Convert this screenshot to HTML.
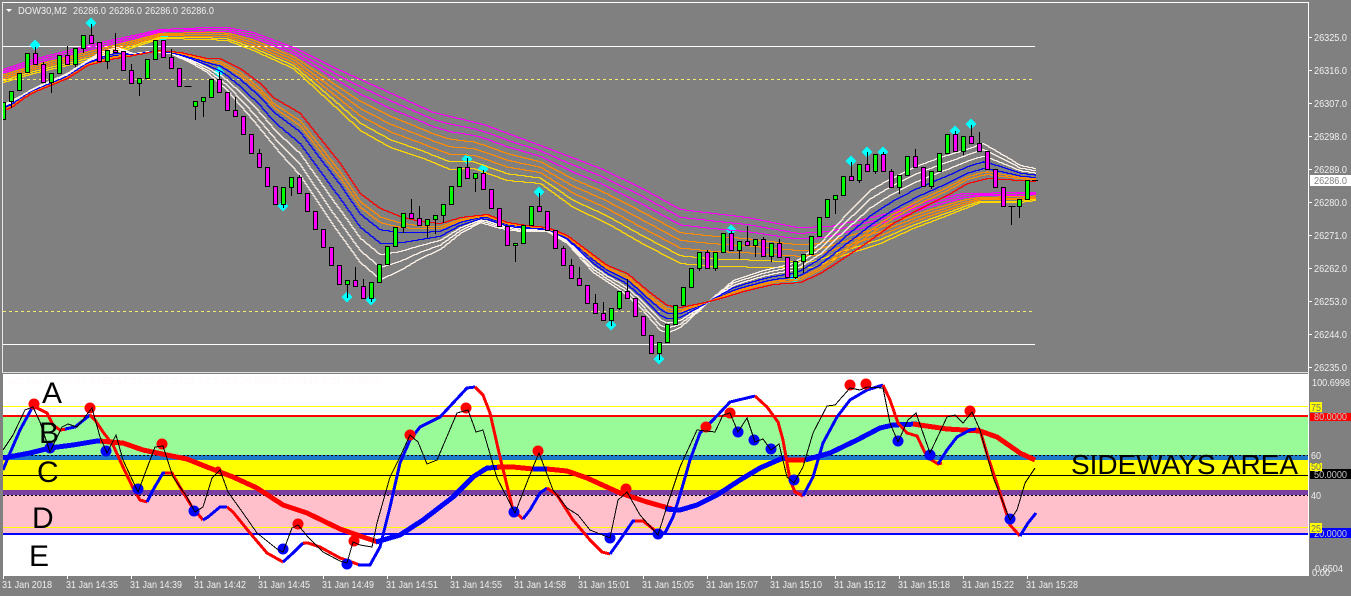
<!DOCTYPE html>
<html>
<head>
<meta charset="utf-8">
<title>DOW30,M2</title>
<style>
html,body{margin:0;padding:0;background:#808080;width:1351px;height:596px;overflow:hidden}
svg{display:block}
text{font-family:"Liberation Sans",sans-serif}
.ax{font-size:10.5px;fill:#f0f0f0}
.dk{font-size:10.5px;fill:#c8c8c8}
.yl{font-size:10.5px;fill:#707070}
.big{font-size:30px;fill:#000}
</style>
</head>
<body>
<svg xmlns="http://www.w3.org/2000/svg" width="1351" height="596" viewBox="0 0 1351 596">
<defs>
<clipPath id="top"><rect x="3" y="3" width="1305" height="369"/></clipPath>
<clipPath id="bot"><rect x="3" y="374" width="1305" height="202"/></clipPath>
</defs>
<rect width="1351" height="596" fill="#808080"/>
<g shape-rendering="crispEdges">
<rect x="2" y="2" width="1307" height="1" fill="#fff"/>
<rect x="2" y="2" width="1" height="371" fill="#e8e8e8"/>
<rect x="1308" y="2" width="1" height="574" fill="#fff"/>
<rect x="2" y="372" width="1307" height="1" fill="#e0e0e0"/>
<rect x="3" y="46" width="1032" height="1" fill="#fff"/>
<rect x="3" y="344" width="1032" height="1" fill="#fff"/>
<path d="M3 79.5H1035M3 311.5H1035" stroke="#f3ee70" stroke-dasharray="3 3" fill="none"/>
</g>
<polygon points="6,9 12,9 9,12" fill="#fff"/>
<text class="ax" x="18" y="14" textLength="49" lengthAdjust="spacingAndGlyphs">DOW30,M2</text>
<text class="ax" x="73" y="14" textLength="33" lengthAdjust="spacingAndGlyphs">26286.0</text>
<text class="ax" x="109" y="14" textLength="33" lengthAdjust="spacingAndGlyphs">26286.0</text>
<text class="ax" x="145" y="14" textLength="33" lengthAdjust="spacingAndGlyphs">26286.0</text>
<text class="ax" x="181" y="14" textLength="33" lengthAdjust="spacingAndGlyphs">26286.0</text>
<g id="diam" fill="#00ffff" clip-path="url(#top)"></g>
<g id="rib" fill="none" clip-path="url(#top)"></g>
<g id="cand" clip-path="url(#top)" shape-rendering="crispEdges"></g>
<path d="M1032 180.5H1038" stroke="#000" shape-rendering="crispEdges"/>

<g fill="#fff" shape-rendering="crispEdges">
<rect x="1309" y="37" width="3" height="1"/><rect x="1309" y="70" width="3" height="1"/><rect x="1309" y="103" width="3" height="1"/><rect x="1309" y="136" width="3" height="1"/><rect x="1309" y="169" width="3" height="1"/><rect x="1309" y="202" width="3" height="1"/><rect x="1309" y="235" width="3" height="1"/><rect x="1309" y="268" width="3" height="1"/><rect x="1309" y="301" width="3" height="1"/><rect x="1309" y="334" width="3" height="1"/><rect x="1309" y="367" width="3" height="1"/>
</g>
<g>
<text class="ax" x="1314" y="41" textLength="33" lengthAdjust="spacingAndGlyphs">26325.0</text>
<text class="ax" x="1314" y="74" textLength="33" lengthAdjust="spacingAndGlyphs">26316.0</text>
<text class="ax" x="1314" y="107" textLength="33" lengthAdjust="spacingAndGlyphs">26307.0</text>
<text class="ax" x="1314" y="140" textLength="33" lengthAdjust="spacingAndGlyphs">26298.0</text>
<text class="ax" x="1314" y="173" textLength="33" lengthAdjust="spacingAndGlyphs">26289.0</text>
<text class="ax" x="1314" y="206" textLength="33" lengthAdjust="spacingAndGlyphs">26280.0</text>
<text class="ax" x="1314" y="239" textLength="33" lengthAdjust="spacingAndGlyphs">26271.0</text>
<text class="ax" x="1314" y="272" textLength="33" lengthAdjust="spacingAndGlyphs">26262.0</text>
<text class="ax" x="1314" y="305" textLength="33" lengthAdjust="spacingAndGlyphs">26253.0</text>
<text class="ax" x="1314" y="338" textLength="33" lengthAdjust="spacingAndGlyphs">26244.0</text>
<text class="ax" x="1314" y="371" textLength="33" lengthAdjust="spacingAndGlyphs">26235.0</text>
</g>
<rect x="1310" y="175" width="41" height="11" fill="#fff"/>
<text x="1314" y="184" style="font-size:10.5px" fill="#808080" textLength="33" lengthAdjust="spacingAndGlyphs">26286.0</text>

<!-- lower window -->
<g shape-rendering="crispEdges">
<rect x="3" y="374" width="1305" height="202" fill="#fff"/>
<rect x="3" y="417" width="1305" height="38" fill="#98fb98"/>
<rect x="3" y="455" width="1305" height="5" fill="#1e78c8"/>
<rect x="3" y="460" width="1305" height="30" fill="#ffff00"/>
<rect x="3" y="490" width="1305" height="5" fill="#7a3fa0"/>
<rect x="3" y="495" width="1305" height="38" fill="#ffc0cb"/>
<rect x="3" y="406" width="1305" height="1" fill="#ffff00"/>
<rect x="3" y="527" width="1305" height="1" fill="#ffff00"/>
<rect x="3" y="415" width="1305" height="2" fill="#ff0000"/>
<rect x="3" y="533" width="1305" height="2" fill="#0000ff"/>
<rect x="3" y="475" width="1305" height="1" fill="#000"/>
<path d="M3 455.5H1308M3 495.5H1308" stroke="#000" stroke-dasharray="2 2" fill="none"/>
</g>
<text x="7" y="384" style="font-size:10px" fill="#fff9f9" textLength="374" lengthAdjust="spacingAndGlyphs">rsi2 Ma (10,0) 57.5722 57.5723 57.5722 57.5723 30.8050 28.4149 RSI 49.8059</text>

<g clip-path="url(#bot)" fill="none" stroke-linejoin="round" shape-rendering="crispEdges">
<g stroke-width="5">
<polyline stroke="#0000ff" points="3,458 30,453 50,448 73,445 97,441 102,441"/>
<polyline stroke="#ff0000" points="100,441 110,442 123,443 143,450 167,455 187,459 207,467 233,477 257,488 283,505 307,513 340,529 360,536 378,542"/>
<polyline stroke="#0000ff" points="376,542 400,535 423,520 453,497 473,477 487,468 503,467"/>
<polyline stroke="#ff0000" points="497,467 513,467 533,469"/>
<polyline stroke="#0000ff" points="533,469 547,469"/>
<polyline stroke="#ff0000" points="547,469 567,471 587,478 620,493 647,502 672,509"/>
<polyline stroke="#0000ff" points="665,509 680,510 697,505 717,495 740,480 760,468 783,458 788,459"/>
<polyline stroke="#ff0000" points="786,460 805,460"/>
<polyline stroke="#0000ff" points="805,460 830,453 857,440 880,428 893,425 917,424"/>
<polyline stroke="#ff0000" points="913,424 947,429 980,431 997,437 1020,453 1035,460"/>
</g>
<g stroke-width="3">
<polyline stroke="#0000ff" points="3,470 10,453 20,430 32,408 36,407"/>
<polyline stroke="#ff0000" points="35,407 47,413 53,425 60,430 67,429"/>
<polyline stroke="#0000ff" points="65,429 75,427 90,415"/>
<polyline stroke="#ff0000" points="90,415 95,420 103,432 113,445 123,467 133,488 140,500 147,502"/>
<polyline stroke="#0000ff" points="147,502 153,490 163,473 167,473"/>
<polyline stroke="#ff0000" points="165,473 172,473 180,487 192,507 203,520"/>
<polyline stroke="#0000ff" points="203,520 208,517 220,507 227,507"/>
<polyline stroke="#ff0000" points="227,507 233,512 250,533 267,553 283,562"/>
<polyline stroke="#0000ff" points="283,562 293,553 302,544 305,543"/>
<polyline stroke="#ff0000" points="303,543 308,543 320,547 340,558 360,565"/>
<polyline stroke="#0000ff" points="358,565 370,565 380,547 390,507 400,463 410,440 420,427 440,417 467,388 475,387"/>
<polyline stroke="#ff0000" points="475,387 483,395 490,413 500,457 513,510 523,519"/>
<polyline stroke="#0000ff" points="523,519 530,510 540,493 547,488"/>
<polyline stroke="#ff0000" points="547,488 557,495 573,520 590,540 602,552 610,554"/>
<polyline stroke="#0000ff" points="610,554 620,540 633,521 637,521"/>
<polyline stroke="#ff0000" points="635,521 643,521 657,532 665,533"/>
<polyline stroke="#0000ff" points="662,533 665,533 673,517 680,495 690,460 700,433 713,420 730,402 755,396"/>
<polyline stroke="#ff0000" points="755,396 767,407 778,422 783,440 790,480 795,492 803,496"/>
<polyline stroke="#0000ff" points="803,496 813,477 823,443 837,417 850,400 867,390 883,385"/>
<polyline stroke="#ff0000" points="883,385 890,400 898,423 907,433 917,436 927,457 938,464 942,463"/>
<polyline stroke="#0000ff" points="938,464 947,450 957,437 970,430 976,429"/>
<polyline stroke="#ff0000" points="976,429 980,430 988,457 1000,493 1010,525 1020,536"/>
<polyline stroke="#0000ff" points="1020,536 1028,523 1036,513"/>
</g>
</g>
<g clip-path="url(#bot)" fill="#ff0000">
<circle cx="34" cy="404" r="5.5"/><circle cx="90" cy="408" r="5.5"/><circle cx="162" cy="444" r="5.5"/><circle cx="218" cy="470" r="3.5"/><circle cx="298" cy="524" r="5.5"/><circle cx="354" cy="541" r="5.5"/><circle cx="410" cy="435" r="5.5"/><circle cx="466" cy="408" r="5.5"/><circle cx="538" cy="451" r="5.5"/><circle cx="626" cy="489" r="5.5"/><circle cx="706" cy="427" r="5.5"/><circle cx="730" cy="413" r="5.5"/><circle cx="850" cy="385" r="5.5"/><circle cx="866" cy="384" r="5.5"/><circle cx="970" cy="411" r="5.5"/>
</g>
<g clip-path="url(#bot)" fill="#0000ff">
<circle cx="50" cy="448" r="5.5"/><circle cx="106" cy="451" r="5.5"/><circle cx="138" cy="489" r="5.5"/><circle cx="194" cy="511" r="5.5"/><circle cx="283" cy="549" r="5.5"/><circle cx="347" cy="564" r="5.5"/><circle cx="514" cy="512" r="5.5"/><circle cx="610" cy="538" r="5.5"/><circle cx="658" cy="534" r="5.5"/><circle cx="738" cy="432" r="5.5"/><circle cx="754" cy="440" r="5.5"/><circle cx="771" cy="449" r="5.5"/><circle cx="794" cy="480" r="5.5"/><circle cx="898" cy="441" r="5.5"/><circle cx="930" cy="455" r="5.5"/><circle cx="1010" cy="519" r="5.5"/>
</g>
<polyline fill="none" stroke="#000" stroke-width="1" shape-rendering="crispEdges" clip-path="url(#bot)" points="3,450 13,435 25,410 33,407 40,422 50,452 62,427 68,424 77,427 92,408 100,437 107,453 116,435 123,460 138,492 155,447 163,446 173,477 187,497 195,512 203,507 212,478 220,470 228,492 243,513 257,533 277,549 283,552 292,528 298,525 308,537 323,552 340,561 347,563 353,542 360,545 372,547 377,523 390,477 400,457 410,435 418,442 427,464 437,460 457,413 468,410 476,432 483,430 497,478 515,513 533,467 539,453 553,490 567,508 578,515 590,530 610,538 618,500 627,492 640,515 658,535 668,503 680,467 697,430 715,432 723,415 730,413 738,432 747,418 755,442 763,439 771,450 779,444 787,477 794,483 803,467 813,433 827,406 835,405 850,388 860,390 867,387 883,388 890,423 898,442 908,420 916,413 930,453 947,417 955,415 963,423 972,412 980,430 993,477 1010,520 1017,510 1025,483 1035,468"/>

<text class="big" x="42" y="403">A</text>
<text class="big" x="39" y="443">B</text>
<text class="big" x="37" y="482">C</text>
<text class="big" x="32" y="528">D</text>
<text class="big" x="29" y="566">E</text>
<text x="1071" y="474" style="font-size:28px" fill="#000" textLength="227" lengthAdjust="spacingAndGlyphs">SIDEWAYS AREA</text>

<text class="ax" x="1312" y="386" textLength="38" lengthAdjust="spacingAndGlyphs">100.6998</text>
<rect x="1310" y="413" width="41" height="8" fill="#ff0000"/>
<text class="dk" x="1314" y="420" textLength="33" lengthAdjust="spacingAndGlyphs">80.0000</text>
<rect x="1310" y="402" width="12" height="10" fill="#ffff00"/>
<text class="yl" x="1311" y="411" textLength="10" lengthAdjust="spacingAndGlyphs">75</text>
<text class="ax" x="1311" y="459" textLength="10" lengthAdjust="spacingAndGlyphs">60</text>
<rect x="1310" y="469" width="41" height="10" fill="#000"/>
<text class="dk" x="1314" y="478" textLength="33" lengthAdjust="spacingAndGlyphs">50.0000</text>
<rect x="1310" y="463" width="12" height="8" fill="#ffff00"/>
<text class="yl" x="1311" y="470" textLength="10" lengthAdjust="spacingAndGlyphs">50</text>
<text class="ax" x="1311" y="499" textLength="10" lengthAdjust="spacingAndGlyphs">40</text>
<rect x="1310" y="528" width="41" height="10" fill="#0000ff"/>
<text class="dk" x="1314" y="537" textLength="33" lengthAdjust="spacingAndGlyphs">20.0000</text>
<rect x="1310" y="523" width="12" height="10" fill="#ffff00"/>
<text class="yl" x="1311" y="532" textLength="10" lengthAdjust="spacingAndGlyphs">25</text>
<text class="ax" x="1315" y="572" textLength="28" lengthAdjust="spacingAndGlyphs">0.6504</text>
<text class="ax" x="1312" y="576" textLength="18" lengthAdjust="spacingAndGlyphs">0.00</text>

<g fill="#fff" shape-rendering="crispEdges">
<rect x="3" y="576" width="1" height="3"/><rect x="67" y="576" width="1" height="3"/><rect x="131" y="576" width="1" height="3"/><rect x="195" y="576" width="1" height="3"/><rect x="259" y="576" width="1" height="3"/><rect x="323" y="576" width="1" height="3"/><rect x="387" y="576" width="1" height="3"/><rect x="451" y="576" width="1" height="3"/><rect x="515" y="576" width="1" height="3"/><rect x="579" y="576" width="1" height="3"/><rect x="643" y="576" width="1" height="3"/><rect x="707" y="576" width="1" height="3"/><rect x="771" y="576" width="1" height="3"/><rect x="835" y="576" width="1" height="3"/><rect x="899" y="576" width="1" height="3"/><rect x="963" y="576" width="1" height="3"/><rect x="1027" y="576" width="1" height="3"/>
</g>
<text class="ax" x="2" y="588" textLength="50" lengthAdjust="spacingAndGlyphs">31 Jan 2018</text>
<text class="ax" x="66" y="588" textLength="52" lengthAdjust="spacingAndGlyphs">31 Jan 14:35</text>
<text class="ax" x="130" y="588" textLength="52" lengthAdjust="spacingAndGlyphs">31 Jan 14:39</text>
<text class="ax" x="194" y="588" textLength="52" lengthAdjust="spacingAndGlyphs">31 Jan 14:42</text>
<text class="ax" x="258" y="588" textLength="52" lengthAdjust="spacingAndGlyphs">31 Jan 14:45</text>
<text class="ax" x="322" y="588" textLength="52" lengthAdjust="spacingAndGlyphs">31 Jan 14:49</text>
<text class="ax" x="386" y="588" textLength="52" lengthAdjust="spacingAndGlyphs">31 Jan 14:51</text>
<text class="ax" x="450" y="588" textLength="52" lengthAdjust="spacingAndGlyphs">31 Jan 14:55</text>
<text class="ax" x="514" y="588" textLength="52" lengthAdjust="spacingAndGlyphs">31 Jan 14:58</text>
<text class="ax" x="578" y="588" textLength="52" lengthAdjust="spacingAndGlyphs">31 Jan 15:01</text>
<text class="ax" x="642" y="588" textLength="52" lengthAdjust="spacingAndGlyphs">31 Jan 15:05</text>
<text class="ax" x="706" y="588" textLength="52" lengthAdjust="spacingAndGlyphs">31 Jan 15:07</text>
<text class="ax" x="770" y="588" textLength="52" lengthAdjust="spacingAndGlyphs">31 Jan 15:10</text>
<text class="ax" x="834" y="588" textLength="52" lengthAdjust="spacingAndGlyphs">31 Jan 15:12</text>
<text class="ax" x="898" y="588" textLength="52" lengthAdjust="spacingAndGlyphs">31 Jan 15:18</text>
<text class="ax" x="962" y="588" textLength="52" lengthAdjust="spacingAndGlyphs">31 Jan 15:22</text>
<text class="ax" x="1026" y="588" textLength="52" lengthAdjust="spacingAndGlyphs">31 Jan 15:28</text>
</svg>
<script>
(function(){
var NS="http://www.w3.org/2000/svg";
function el(p,n,a){var e=document.createElementNS(NS,n);for(var k in a)e.setAttribute(k,a[k]);p.appendChild(e);return e;}
var D=[[35,45],[91,23],[163,37],[219,72],[283,206],[347,297],[371,300],[467,159],[483,169],[539,192],[611,325],[659,359],[731,230],[795,278],[851,161],[867,152],[883,152],[955,131],[971,124]];
var dg=document.getElementById("diam");
D.forEach(function(d){el(dg,"polygon",{points:(d[0]-5.5)+","+d[1]+" "+d[0]+","+(d[1]-5.5)+" "+(d[0]+5.5)+","+d[1]+" "+d[0]+","+(d[1]+5.5)});});
function ip(P,x){if(x<=P[0][0])return P[0][1];for(var i=1;i<P.length;i++){if(x<=P[i][0]){var a=P[i-1],b=P[i];return a[1]+(b[1]-a[1])*(x-a[0])/(b[0]-a[0]);}}return P[P.length-1][1];}
var T=[[3,69],[33,59],[100,42],[133,35],[160,29],[207,27],[227,27],[253,32],[293,47],[340,70],[400,97],[433,112],[483,124],[540,145],[600,168],[640,187],[680,209],[747,217],[797,227],[830,226],[880,215],[930,200],[963,193],[1020,192],[1035,192]];
var B=[[3,82],[33,73],[100,57],[133,47],[160,38],[207,39],[227,40],[253,50],[293,68],[340,111],[360,130],[390,147],[423,158],[450,169],[473,168],[507,180],[540,183],[573,207],[607,223],[640,242],[680,263],[713,266],[780,267],[813,267],[837,257],[880,243],[913,228],[947,215],[980,202],[1020,202],[1035,200]];
var W=[[3,104],[23,94],[33,88],[67,73],[87,60],[100,52],[117,47],[133,53],[150,51],[170,53],[190,62],[207,72],[227,90],[253,120],[280,153],[300,175],[333,225],[360,262],[380,279],[400,270],[420,258],[440,249],[460,233],[480,222],[500,228],[520,231],[547,231],[567,243],[593,272],[623,292],[640,307],[660,330],[668,332],[680,327],[690,318],[713,297],[733,280],[763,270],[793,263],[820,243],[847,213],[870,190],[887,180],[913,167],[940,157],[963,150],[983,143],[1007,157],[1020,165],[1035,168]];
var R=[[3,110],[11,107],[23,98],[33,92],[67,78],[87,65],[110,59],[133,55],[160,50],[180,52],[207,58],[220,58],[240,68],[260,83],[273,97],[300,113],[340,163],[360,193],[380,208],[400,216],[420,221],[440,223],[460,217],[487,214],[507,222],[527,225],[547,227],[567,235],[587,250],[607,265],[627,273],[647,290],[667,305],[680,307],[700,303],[720,298],[747,290],[773,284],[800,282],[820,273],[840,260],[867,242],[893,223],[920,208],[947,195],[967,183],[987,178],[1020,180],[1035,181]];
var rg=document.getElementById("rib");
function band(A,C,n,colorAt,fAt){for(var k=0;k<n;k++){var f=fAt(k),dd="",py=null;for(var x=3;x<=1035;x++){var y=Math.round(ip(A,x)+(ip(C,x)-ip(A,x))*f)+.5;if(py===null){dd="M"+x+" "+y;}else{if(y!==py)dd+="V"+y;dd+="H"+(x+1);}py=y;}el(rg,"path",{d:dd,stroke:colorAt(k),"stroke-width":1,"shape-rendering":"crispEdges"});}}
var upC=["#ff00ff","#ff00ff","#ff00ff","#ff8c00","#ff8c00","#ff8c00","#ffd700","#ffd700"];
band(T,B,8,function(k){return upC[k];},function(k){return k/7;});
var fs=[0,.17,.35,.51,.7,.8,.88,1],faC=["#faf0e6","#faf0e6","#faf0e6","#0000ff","#0000ff","#ff8c00","#ff8c00","#ff0000"];
band(W,R,8,function(k){return faC[k];},function(k){return fs[k];});
var g="g",m="m",d="d";
var C=[[102,119,g],[91,101,g,0,108],[73,90,g],[53,72,g],[53,64,m,47],[64,82,m,62],[73,82,g,0,93],[55,73,g],[55,64,m,46],[48,64,g,0,67],[35,48,g,0,53],[35,43,m,24],[42,61,m],[50,61,g,0,69],[50,52,m,33],[51,70,m],[70,83,m,64],[78,83,g,0,96],[59,78,g],[40,59,g],[40,57,m],[57,68,m,49],[68,86,m],[86,86,d],[101,106,g,0,120],[97,101,g,0,117],[79,97,g],[79,92,m,72],[92,110,m],[110,116,m,97],[116,134,m],[134,153,m],[153,167,m,149],[167,186,m],[186,204,m],[187,204,g,0,208],[177,187,g,0,196],[177,193,m,175],[193,211,m],[211,229,m],[229,247,m],[247,265,m],[265,284,m],[280,284,g,0,298],[280,286,m,267],[286,298,m,279],[282,298,g,0,302],[264,282,g],[246,264,g],[227,246,g],[213,227,g,0,233],[213,218,m,199],[218,225,m,206],[219,225,g,0,238],[215,219,g,0,234],[204,215,g,0,223],[186,204,g],[167,186,g],[167,178,m,158],[173,178,g,0,192],[173,189,m,170],[189,208,m],[208,226,m],[226,245,m],[243,245,g,0,262],[225,243,g],[206,225,g],[206,211,m,193],[211,230,m],[230,248,m],[248,265,m,246],[265,278,m,259],[278,285,m,267],[285,303,m],[303,313,m,294],[313,320,m,302],[308,320,g,0,326],[291,308,g,0,310],[291,298,m,279],[298,316,m],[316,335,m],[335,353,m],[342,353,g,0,360],[324,342,g],[305,324,g],[287,305,g],[268,287,g],[252,268,g,0,271],[252,268,m,250],[252,268,g,0,271],[233,252,g],[233,250,m,231],[241,250,g,0,259],[241,245,m,226],[239,245,g,0,257],[239,256,m,237],[243,256,g,0,262],[243,257,m,239],[257,277,m],[261,277,g,0,279],[254,261,g,0,273],[236,254,g],[217,236,g],[199,217,g],[195,199,g,0,214],[176,195,g],[176,180,m,162],[164,180,g,0,183],[164,171,m,152],[154,171,g,0,174],[154,171,m,152],[171,187,m,169],[175,187,g,0,194],[156,175,g],[156,167,m,149],[167,186,m],[171,186,g,0,189],[153,171,g],[134,153,g],[134,151,m,131],[136,151,g,0,155],[136,143,m,125],[143,151,m,132],[151,169,m],[169,187,m],[187,206,m],[206,206,d,0,225],[199,206,g,0,218],[180,199,g]];
var cg=document.getElementById("cand");
C.forEach(function(c,i){var x=3.5+8*i,top=c[0],bot=c[1],t=c[2],wt=c[3],wb=c[4];
if(wt)el(cg,"line",{x1:x,x2:x,y1:wt,y2:top,stroke:"#000"});
if(wb)el(cg,"line",{x1:x,x2:x,y1:bot,y2:wb,stroke:"#000"});
if(t==="d"){el(cg,"line",{x1:x-3,x2:x+4,y1:top+.5,y2:top+.5,stroke:"#000"});return;}
el(cg,"rect",{x:x-2,y:top+.5,width:4,height:bot-top,fill:t==="g"?"#00ff00":"#ff00ff",stroke:"#000"});
});
})();
</script>
</body>
</html>
